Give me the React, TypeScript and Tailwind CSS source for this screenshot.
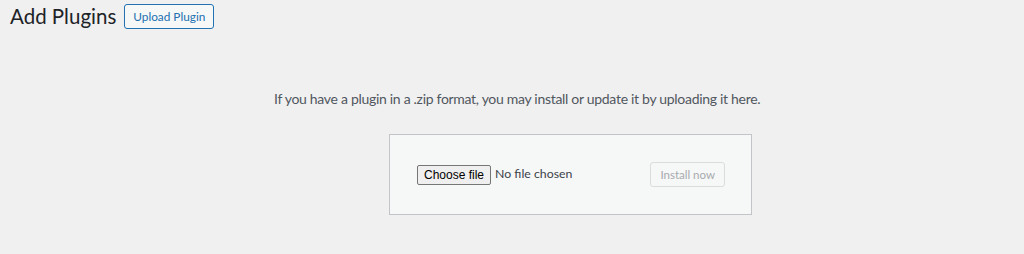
export default function App() {
  return (
    <div className="min-h-[254px] w-full bg-[#f0f0f1] font-['Lato',sans-serif] text-[#3c434a]">
      <div className="flex items-center gap-[8px] pl-[10px] pt-[4px]">
        <h1 className="text-[20.5px] font-normal leading-[25px] text-[#1d2327]">Add Plugins</h1>
        <button className="h-[25px] rounded-[3px] border border-[#2271b1] bg-[#f6f7f7] px-[8px] text-[11.8px] leading-[23px] text-[#2271b1]">
          Upload Plugin
        </button>
      </div>
      <p className="mt-[60px] pl-[274px] text-[14px] leading-[20px] tracking-[-0.3px] text-[#50575e]">
        If you have a plugin in a .zip format, you may install or update it by uploading it here.
      </p>
      <div className="pl-[389px] pt-[25px]">
        <form className="flex h-[81px] w-[363px] items-center justify-between border border-[#c3c4c7] bg-[#f6f7f7] pl-[27px] pr-[26px]">
          <div className="flex items-center">
            <span className="inline-block h-[20px] rounded-[2px] border border-[#767676] bg-[#efefef] px-[6px] font-['Liberation_Sans',sans-serif] text-[12px] leading-[18px] text-black">
              Choose file
            </span>
            <span className="ml-[4px] text-[12.3px] text-[#3c434a]">No file chosen</span>
          </div>
          <button
            disabled
            className="h-[25px] rounded-[3px] border border-[#dcdcde] bg-[#f6f7f7] px-[9px] text-[11.5px] leading-[23px] text-[#a7aaad]"
          >
            Install now
          </button>
        </form>
      </div>
    </div>
  );
}
